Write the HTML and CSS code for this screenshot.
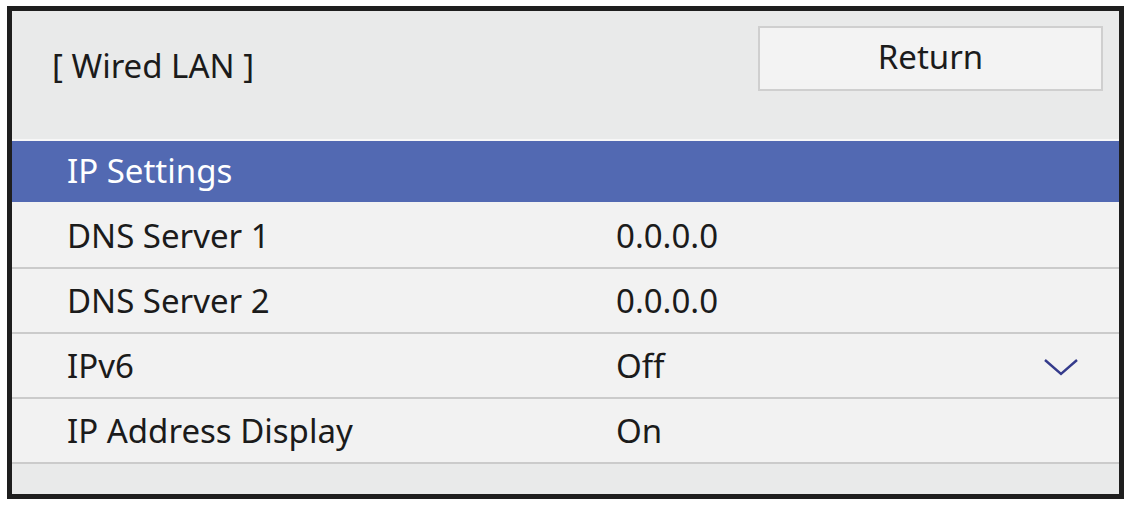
FILE: index.html
```html
<!DOCTYPE html>
<html lang="en">

<head>
    <meta charset="UTF-8">
    <meta name="viewport" content="width=device-width, initial-scale=1.0">
    <title>Wired LAN</title>
    <link rel="stylesheet" href="styles.css">
</head>

<body>
    <div class="screen">
        <div class="header">
            <span class="title">[ Wired LAN ]</span>
            <button class="btn-return">Return</button>
        </div>
        <div class="menu">
            <div class="menu-item selected">
                <span class="label">IP Settings</span>
            </div>
            <div class="menu-item">
                <span class="label">DNS Server 1</span>
                <span class="value">0.0.0.0</span>
            </div>
            <div class="menu-item">
                <span class="label">DNS Server 2</span>
                <span class="value">0.0.0.0</span>
            </div>
            <div class="menu-item">
                <span class="label">IPv6</span>
                <span class="value">Off</span>
                <svg class="chevron" width="36" height="18" viewBox="0 0 36 18">
                    <polyline points="2,2 18,16 34,2" fill="none" stroke="#353b8c" stroke-width="2.4" />
                </svg>
            </div>
            <div class="menu-item">
                <span class="label">IP Address Display</span>
                <span class="value">On</span>
            </div>
        </div>
        <div class="footer"></div>
    </div>
</body>

</html>
```

FILE: styles.css
```css
* {
    margin: 0;
    padding: 0;
    box-sizing: border-box;
}

body {
    font-family: "Noto Sans", "Open Sans", sans-serif;
    background-color: #fff;
    color: #1b1b1b;
}

.screen {
    margin: 6px 0 0 7px;
    width: 1117px;
    height: 493px;
    border: 5px solid #1e1e1e;
    background-color: #e9eaea;
    display: flex;
    flex-direction: column;
}

.header {
    height: 130px;
    display: flex;
    justify-content: space-between;
    align-items: flex-start;
    padding: 15px 16px 0 40px;
    border-bottom: 2px solid #f7f7f7;
}

.title {
    font-size: 33px;
    margin-top: 17px;
}

.btn-return {
    width: 345px;
    height: 65px;
    background-color: #f3f3f3;
    border: 2px solid #cfcfcf;
    font-family: inherit;
    font-size: 33px;
    color: #1b1b1b;
    padding-bottom: 4px;
}

.menu {
    display: flex;
    flex-direction: column;
}

.menu-item {
    height: 65px;
    display: flex;
    align-items: center;
    padding-left: 55px;
    background-color: #f2f2f2;
    border-bottom: 2px solid #cbcbcb;
    font-size: 33px;
}

.menu-item.selected {
    height: 63px;
    padding-bottom: 2px;
    background-color: #5269b2;
    background-clip: padding-box;
    color: #fff;
    border-bottom: 2px solid #f2f2f2;
}

.menu-item .label {
    width: 549px;
}

.menu-item .value {
    flex: 1;
}

.chevron {
    margin-right: 40px;
    margin-top: 2px;
}

.footer {
    flex: 1;
}
```
